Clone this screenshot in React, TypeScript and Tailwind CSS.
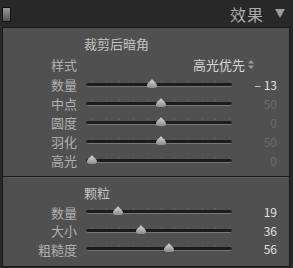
import React from 'react';

interface SliderRow {
  label: string;
  value: string;
  frac: number;
  bright: boolean;
}

const VIGNETTE: SliderRow[] = [
  { label: '数量', value: '– 13', frac: 0.435, bright: true },
  { label: '中点', value: '50', frac: 0.5, bright: false },
  { label: '圆度', value: '0', frac: 0.5, bright: false },
  { label: '羽化', value: '50', frac: 0.5, bright: false },
  { label: '高光', value: '0', frac: 0, bright: false },
];

const GRAIN: SliderRow[] = [
  { label: '数量', value: '19', frac: 0.19, bright: true },
  { label: '大小', value: '36', frac: 0.36, bright: true },
  { label: '粗糙度', value: '56', frac: 0.56, bright: true },
];

const TICKS = [0, 1, 2, 3, 4, 5, 6, 7, 8, 9, 10];

const Thumb = () => (
  <svg width="10" height="9" viewBox="0 0 10 9">
    <defs>
      <linearGradient id="tg" x1="0" y1="0" x2="0" y2="1">
        <stop offset="0" stopColor="#d8d8d8" />
        <stop offset="1" stopColor="#8c8c8c" />
      </linearGradient>
    </defs>
    <path d="M5 0 C6 2.2 10 4 10 6.3 A2.6 2.6 0 0 1 7.4 9 H2.6 A2.6 2.6 0 0 1 0 6.3 C0 4 4 2.2 5 0Z" fill="url(#tg)" />
  </svg>
);

const Row: React.FC<{ row: SliderRow; h: string }> = ({ row, h }) => (
  <div className={`flex items-center ${h}`}>
    <div className="w-[74px] text-right text-[13px] leading-none text-[#b0b0b0]">{row.label}</div>
    <div className="relative ml-[9px] w-[146px] h-full flex items-center">
      {TICKS.map(t => (
        <div
          key={t}
          className="absolute w-px h-px bg-[#6a6a6a]"
          style={{ left: 6 + t * 13.7, top: 'calc(50% - 4px)' }}
        />
      ))}
      <div className="w-full h-[4px] rounded-full bg-[#1c1c1c] border-b border-[#767676]" />
      <div className="absolute" style={{ left: 1 + row.frac * 137, top: 'calc(50% - 6px)' }}>
        <Thumb />
      </div>
    </div>
    <div
      className={`w-[45px] text-right text-[12px] leading-none whitespace-pre ${row.bright ? 'text-[#e2e2e2]' : 'text-[#6b6b6b]'}`}
    >
      {row.value}
    </div>
  </div>
);

export default function App() {
  return (
    <div
      className="w-[293px] h-[268px] bg-[#282828] overflow-hidden"
      style={{ fontFamily: '"Noto Sans CJK SC", "Noto Sans", sans-serif' }}
    >
      {/* header */}
      <div className="h-[27px] flex items-center">
        <div className="ml-[2px] mt-[1px] w-[9px] h-[15px] border border-[#111] bg-gradient-to-b from-[#9a9a9a] to-[#555]" />
        <div className="flex-1" />
        <div className="text-[16px] leading-none text-[#ababab] tracking-[1px]">效果</div>
        <svg width="10" height="9" viewBox="0 0 10 9" className="ml-[11px] mr-[8px]">
          <path d="M0 0 H10 L5 9Z" fill="#9c9c9c" />
        </svg>
      </div>

      {/* panel */}
      <div className="ml-[2px] w-[288px] h-[240px] bg-[#505050] border border-[#181818]">
        <div className="pt-[6px] pb-[6px]">
          <div className="h-[19px] flex items-center pl-[81px] text-[13px] leading-none text-[#c4c4c4]">裁剪后暗角</div>
          <div className="h-[22px] flex items-center">
            <div className="w-[74px] text-right text-[13px] leading-none text-[#b0b0b0]">样式</div>
            <div className="flex-1" />
            <div className="text-[13px] leading-none text-[#d6d6d6]">高光优先</div>
            <svg width="6" height="9" viewBox="0 0 6 9" className="ml-[3px] mr-[35px]">
              <path d="M0 3.5 L3 0 L6 3.5Z M0 5.5 L6 5.5 L3 9Z" fill="#9a9a9a" />
            </svg>
          </div>
          {VIGNETTE.map(r => (
            <Row key={r.label} row={r} h="h-[19px]" />
          ))}
        </div>
        <div className="border-t border-[#1c1c1c] border-b border-b-[#5a5a5a]" />
        <div className="pt-[3px]">
          <div className="h-[22px] flex items-center pl-[81px] text-[13px] leading-none text-[#c4c4c4]">颗粒</div>
          {GRAIN.map(r => (
            <Row key={r.label} row={r} h="h-[18.5px]" />
          ))}
        </div>
      </div>
    </div>
  );
}
